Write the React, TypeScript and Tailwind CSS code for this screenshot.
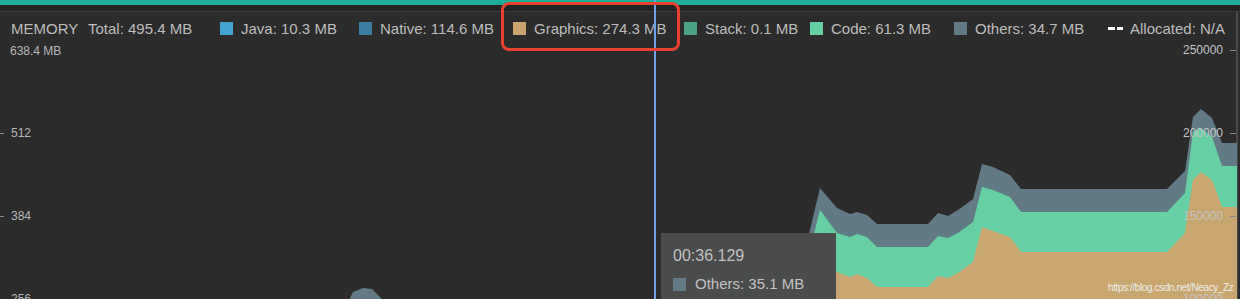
import React from "react";

type LegendItem = {
  label: string;
  swatch: string;
  width: string;
};

const legend: LegendItem[] = [
  { label: "Java: 10.3 MB", swatch: "bg-[#43a2d2]", width: "w-[139px]" },
  { label: "Native: 114.6 MB", swatch: "bg-[#3a7ea2]", width: "w-[154px]" },
  { label: "Graphics: 274.3 MB", swatch: "bg-[#c9a46e]", width: "w-[171px]" },
  { label: "Stack: 0.1 MB", swatch: "bg-[#49a384]", width: "w-[126px]" },
  { label: "Code: 61.3 MB", swatch: "bg-[#64cfa2]", width: "w-[144px]" },
  { label: "Others: 34.7 MB", swatch: "bg-[#627a85]", width: "w-[154px]" },
];

const toPoints = (pts: number[][]) => pts.map((p) => p.join(",")).join(" ");

const others = [
  [793, 300], [820, 188], [837, 208], [850, 214], [857, 212], [867, 215], [877, 224],
  [928, 224], [938, 213], [948, 216], [958, 210], [973, 199], [982, 164], [993, 167],
  [1010, 175], [1021, 189], [1167, 189], [1185, 171], [1193, 117], [1201, 109],
  [1212, 118], [1222, 143], [1237, 143], [1237, 300],
];

const code = [
  [797, 300], [820, 210], [837, 233], [850, 237], [857, 234], [867, 237], [877, 247],
  [928, 247], [938, 236], [948, 238], [958, 233], [973, 222], [982, 187], [993, 190],
  [1010, 197], [1021, 212], [1167, 212], [1185, 193], [1193, 132], [1201, 128],
  [1212, 137], [1222, 166], [1237, 166], [1237, 300],
];

const graphics = [
  [818, 300], [826, 268], [837, 272], [850, 277], [857, 274], [867, 278], [877, 287],
  [928, 287], [938, 276], [948, 278], [958, 273], [973, 262], [982, 227], [993, 231],
  [1010, 237], [1021, 252], [1167, 252], [1185, 233], [1193, 180], [1201, 172],
  [1212, 180], [1222, 207], [1237, 207], [1237, 300],
];

const bump = [[349, 300], [353, 292], [363, 288], [372, 289], [383, 300]];

const leftTicks = [
  { label: "512", top: "top-[82px]" },
  { label: "384", top: "top-[165px]" },
  { label: "256", top: "top-[248px]" },
];

const rightTicks = [
  { label: "250000", top: "top-[-1px]" },
  { label: "200000", top: "top-[82px]" },
  { label: "150000", top: "top-[165px]" },
  { label: "100000", top: "top-[248px]" },
];

export default function App() {
  return (
    <div className="relative flex h-[299px] w-[1240px] flex-col overflow-hidden bg-[#2b2b2b] font-['Liberation_Sans',Arial,sans-serif] text-[#bcbcbc]">
      {/* Top strip */}
      <div className="h-[5px] shrink-0 bg-[#1fad9b]" />
      <div className="h-[7px] shrink-0 border-b border-[#3b3b3b] bg-[#232323]" />

      <div className="flex min-h-0 w-[1238px] flex-1 flex-col border-r-2 border-[#4a4a4a]">
        {/* Legend */}
        <div className="flex h-[32px] shrink-0 items-center text-[15px] leading-none">
          <span className="ml-[11px] w-[77px]">MEMORY</span>
          <span className="w-[132px]">Total: 495.4 MB</span>
          {legend.map((item) => (
            <div key={item.label} className={`flex items-center gap-[8px] ${item.width}`}>
              <span className={`h-[13px] w-[13px] ${item.swatch}`} />
              <span>{item.label}</span>
            </div>
          ))}
          <div className="flex items-center gap-[7px]">
            <span className="flex gap-[2px]">
              <span className="h-[3px] w-[7px] bg-white" />
              <span className="h-[3px] w-[6px] bg-white" />
            </span>
            <span>Allocated: N/A</span>
          </div>
        </div>

        {/* Chart */}
        <div className="relative min-h-0 flex-1">
          <svg className="absolute inset-0" width="1238" height="255" viewBox="0 44 1238 255">
            <polygon points={toPoints(bump)} fill="#627a85" />
            <polygon points={toPoints(others)} fill="#627a85" />
            <polygon points={toPoints(code)} fill="#66cfa4" />
            <polygon points={toPoints(graphics)} fill="#c9a56f" />
          </svg>

          <span className="absolute left-[10px] top-0 text-[12px] leading-[14px] text-[#b8b8b8]">638.4 MB</span>

          {leftTicks.map((t) => (
            <div key={t.label} className={`absolute left-0 flex items-center gap-[7px] ${t.top}`}>
              <span className="h-px w-[4px] bg-[#8a8a8a]" />
              <span className="text-[12px] leading-[14px] text-[#b8b8b8]">{t.label}</span>
            </div>
          ))}

          {rightTicks.map((t) => (
            <div key={t.label} className={`absolute right-0 flex items-center gap-[7px] ${t.top}`}>
              <span className="text-[12px] leading-[14px] text-[#c4c4c4]">{t.label}</span>
              <span className="h-px w-[6px] bg-[#8a8a8a]" />
            </div>
          ))}

          <span className="absolute left-[1108px] top-[238px] text-[10px] leading-[12px] tracking-[-0.4px] text-[#ececec]">
            https://blog.csdn.net/Neacy_Zz
          </span>

          {/* Tooltip */}
          <div className="absolute left-[661px] top-[189px] flex h-[80px] w-[175px] flex-col bg-[#4a4b4b] pl-[12px] pt-[14px]">
            <span className="text-[16px] leading-[18px] text-[#c2c2c2]">00:36.129</span>
            <div className="mt-[11px] flex items-center gap-[9px]">
              <span className="h-[13px] w-[13px] bg-[#627a85]" />
              <span className="text-[15px] leading-[16px] text-[#c2c2c2]">Others: 35.1 MB</span>
            </div>
          </div>
        </div>
      </div>

      {/* Cursor line */}
      <div className="absolute left-[654px] top-0 h-full w-[2px] bg-[#6ea1ea]" />

      {/* Highlight box */}
      <div className="absolute left-[501px] top-[2px] h-[49px] w-[179px] rounded-[8px] border-[3px] border-[#e5432d]" />
    </div>
  );
}
